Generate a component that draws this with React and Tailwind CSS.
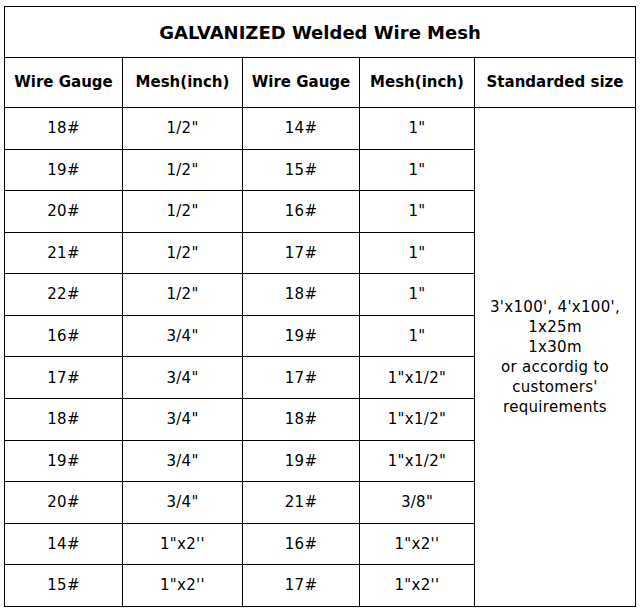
const rows = [
  ['18#', '1/2"', '14#', '1"'],
  ['19#', '1/2"', '15#', '1"'],
  ['20#', '1/2"', '16#', '1"'],
  ['21#', '1/2"', '17#', '1"'],
  ['22#', '1/2"', '18#', '1"'],
  ['16#', '3/4"', '19#', '1"'],
  ['17#', '3/4"', '17#', '1"x1/2"'],
  ['18#', '3/4"', '18#', '1"x1/2"'],
  ['19#', '3/4"', '19#', '1"x1/2"'],
  ['20#', '3/4"', '21#', '3/8"'],
  ['14#', "1\"x2''", '16#', "1\"x2''"],
  ['15#', "1\"x2''", '17#', "1\"x2''"],
];

export default function App() {
  return (
    <div className="bg-white w-[640px] h-[614px] pl-[4px] pt-[6px] font-['DejaVu_Sans',Verdana,sans-serif] text-black">
      <table className="border-collapse table-fixed w-[631px]">
        <colgroup>
          <col className="w-[118px]" />
          <col className="w-[120px]" />
          <col className="w-[117px]" />
          <col className="w-[115px]" />
          <col className="w-[161px]" />
        </colgroup>
        <tbody>
          <tr className="h-[51px]">
            <td colSpan={5} className="border border-black text-center text-[18px] font-bold p-0">
              GALVANIZED Welded Wire Mesh
            </td>
          </tr>
          <tr className="h-[50px]">
            {['Wire Gauge', 'Mesh(inch)', 'Wire Gauge', 'Mesh(inch)', 'Standarded size'].map((h, i) => (
              <td key={i} className="border border-black text-center text-[15px] font-bold p-0 whitespace-nowrap">
                {h}
              </td>
            ))}
          </tr>
          {rows.map((r, i) => (
            <tr key={i} className="h-[41.58px]">
              {r.map((c, j) => (
                <td key={j} className="border border-black text-center text-[15px] tracking-[0.3px] p-0">
                  {c}
                </td>
              ))}
              {i === 0 && (
                <td rowSpan={12} className="border border-black text-center text-[15px] tracking-[0.3px] leading-[20px] p-0">
                  3'x100', 4'x100',<br />
                  1x25m<br />
                  1x30m<br />
                  or accordig to<br />
                  customers'<br />
                  requirements
                </td>
              )}
            </tr>
          ))}
        </tbody>
      </table>
    </div>
  );
}
